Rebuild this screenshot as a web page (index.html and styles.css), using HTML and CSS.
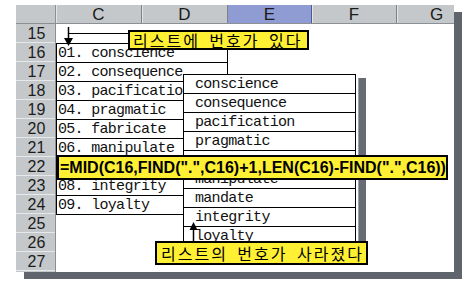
FILE: index.html
```html
<!DOCTYPE html>
<html lang="ko">
<head>
<meta charset="utf-8">
<link rel="stylesheet" href="styles.css">
</head>
<body>
<div class="page">
  <div class="sheet">
    <div class="colhead">
      <div class="corner"></div>
      <div class="ch c">C</div>
      <div class="ch d">D</div>
      <div class="ch e sel">E</div>
      <div class="ch f">F</div>
      <div class="ch g">G</div>
    </div>
    <div class="body">
      <div class="rowhead">
        <div class="rh">15</div>
        <div class="rh">16</div>
        <div class="rh">17</div>
        <div class="rh">18</div>
        <div class="rh">19</div>
        <div class="rh">20</div>
        <div class="rh">21</div>
        <div class="rh">22</div>
        <div class="rh">23</div>
        <div class="rh">24</div>
        <div class="rh">25</div>
        <div class="rh">26</div>
        <div class="rh">27</div>
      </div>
      <div class="cells">
        <div class="range">
          <div class="r">01. conscience</div>
          <div class="r">02. consequence</div>
          <div class="r">03. pacification</div>
          <div class="r">04. pragmatic</div>
          <div class="r">05. fabricate</div>
          <div class="r">06. manipulate</div>
          <div class="r"></div>
          <div class="r">08. integrity</div>
          <div class="r">09. loyalty</div>
        </div>
      </div>
    </div>
  </div>

  <div class="popup">
    <div class="pr">conscience</div>
    <div class="pr">consequence</div>
    <div class="pr">pacification</div>
    <div class="pr">pragmatic</div>
    <div class="pr"></div>
    <div class="pr">manipulate</div>
    <div class="pr">mandate</div>
    <div class="pr">integrity</div>
    <div class="pr">loyalty</div>
  </div>
  <div class="bar"></div>

  <svg class="arrows" width="472" height="287" viewBox="0 0 472 287">
    <line x1="68.5" y1="27" x2="68.5" y2="39" stroke="#000" stroke-width="1.5"/>
    <polygon points="64,38 73,38 68.5,46" fill="#000"/>
    <line x1="68" y1="33.5" x2="130" y2="33.5" stroke="#000" stroke-width="1.2"/>
    <line x1="193.5" y1="229" x2="193.5" y2="242" stroke="#000" stroke-width="1.5"/>
    <polygon points="189.5,230 197.5,230 193.5,222" fill="#000"/>
  </svg>

  <div class="callout top">리스트에 번호가 있다</div>
  <div class="callout formula">=MID(C16,FIND(".",C16)+1,LEN(C16)-FIND(".",C16))</div>
  <div class="callout bottom">리스트의 번호가 사라졌다</div>
</div>
</body>
</html>
```

FILE: styles.css
```css
* { box-sizing: border-box; }
html, body { margin: 0; padding: 0; background: #fff; }

.page {
  position: relative;
  width: 472px;
  height: 287px;
  padding: 5px 0 0 16px;
  overflow: hidden;
  font-family: "Liberation Sans", Arial, sans-serif;
}

.sheet {
  width: 438px;
  height: 267px;
  background: #fff;
  overflow: hidden;
  box-shadow: 8px 7px 0 #60646c;
  display: flex;
  flex-direction: column;
}

.colhead {
  display: flex;
  flex: 0 0 19px;
  height: 19px;
  background: #c4c8cb;
  border-bottom: 1px solid #8c9094;
}
.corner { flex: 0 0 40px; border-right: 1px solid #8c9094; }
.ch {
  display: flex;
  align-items: center;
  justify-content: center;
  font-size: 17px;
  color: #1a1a1a;
  border-right: 1px solid #7e8286;
  box-shadow: inset 1px 0 0 #e2e4e6;
  line-height: 1;
  padding-top: 1px;
}
.c { flex: 0 0 86px; }
.d { flex: 0 0 86px; }
.e { flex: 0 0 84px; }
.f { flex: 0 0 85px; }
.g { flex: 0 0 80px; }
.sel { background: #8f9bd3; border-right-color: #4e5a96; box-shadow: none; }

.body { display: flex; flex: 1 1 auto; }

.rowhead {
  flex: 0 0 40px;
  display: flex;
  flex-direction: column;
  background: #c4c8cb;
  border-right: 1px solid #8c9094;
}
.rh {
  flex: 0 0 19px;
  height: 19px;
  border-bottom: 1px solid #e6e8ea;
  display: flex;
  align-items: center;
  justify-content: center;
  font-size: 16px;
  color: #1c1c1c;
  padding: 1px 0 0 2px;
}

.cells { flex: 1 1 auto; }
.range {
  margin-top: 19px;
  width: 172px;
  border: 1px solid #000;
  border-bottom: none;
}
.r, .pr {
  height: 19px;
  border-bottom: 1px solid #000;
  font-family: "Liberation Mono", "Courier New", monospace;
  font-size: 15px;
  letter-spacing: -0.7px;
  line-height: 17px;
  padding-top: 1px;
  white-space: nowrap;
  color: #111;
}
.r { padding-left: 1px; }

.popup {
  position: absolute;
  left: 183px;
  top: 74px;
  width: 173px;
  background: #fff;
  border: 1px solid #000;
}
.pr { padding-left: 11px; }
.pr:last-child { border-bottom: none; }

.bar {
  position: absolute;
  left: 358px;
  top: 78px;
  width: 8px;
  height: 168px;
  background: #676b73;
  border-left: 1px solid #9a9ea8;
}

.arrows { position: absolute; left: 0; top: 0; }

.callout {
  position: absolute;
  background: #fff033;
  border: 2px solid #000;
  display: flex;
  align-items: center;
  white-space: nowrap;
  color: #000;
}
.top, .bottom {
  font-family: "Noto Sans CJK KR", sans-serif;
  font-size: 16px;
  line-height: 16px;
  letter-spacing: 2px;
  word-spacing: 3px;
}
.top {
  left: 128px;
  top: 30px;
  width: 181px;
  height: 20px;
  padding-left: 3px;
}
.bottom {
  left: 155px;
  top: 241px;
  width: 213px;
  height: 24px;
  padding-left: 4px;
}
.formula {
  left: 57px;
  top: 155px;
  width: 391px;
  height: 25px;
  padding-left: 1px;
  font-family: "Liberation Sans", Arial, sans-serif;
  font-weight: bold;
  font-size: 16px;
  line-height: 18px;
}
```
